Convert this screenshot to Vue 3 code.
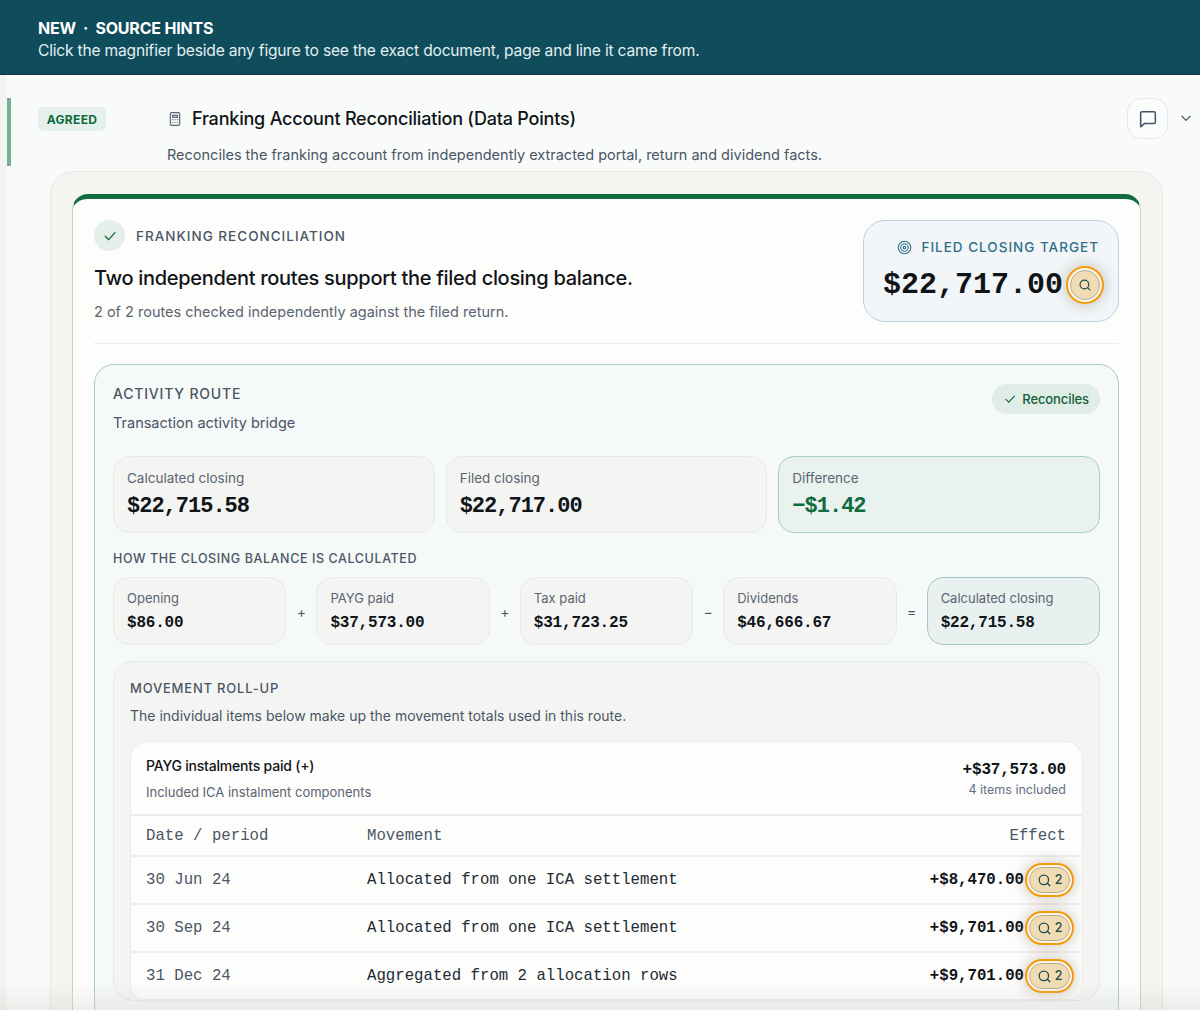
<script setup>
const metrics = [
  { label: 'Calculated closing', value: '$22,715.58' },
  { label: 'Filed closing', value: '$22,717.00' },
  { label: 'Difference', value: '−$1.42', diff: true },
]
const steps = [
  { label: 'Opening', value: '$86.00', op: '+' },
  { label: 'PAYG paid', value: '$37,573.00', op: '+' },
  { label: 'Tax paid', value: '$31,723.25', op: '−' },
  { label: 'Dividends', value: '$46,666.67', op: '=' },
  { label: 'Calculated closing', value: '$22,715.58', total: true },
]
const rows = [
  { date: '30 Jun 24', text: 'Allocated from one ICA settlement', value: '+$8,470.00' },
  { date: '30 Sep 24', text: 'Allocated from one ICA settlement', value: '+$9,701.00' },
  { date: '31 Dec 24', text: 'Aggregated from 2 allocation rows', value: '+$9,701.00' },
]
</script>

<template>
  <div class="screen">
    <header class="banner">
      <div class="banner-title">NEW &nbsp;·&nbsp; SOURCE HINTS</div>
      <div class="banner-text">Click the magnifier beside any figure to see the exact document, page and line it came from.</div>
    </header>
    <div class="page">
      <span class="accent"></span>
      <section class="top">
        <span class="badge">AGREED</span>
        <div class="top-main">
          <h1 class="doc-title">
            <svg class="calc" viewBox="0 0 24 24" fill="none" stroke="#5a6470" stroke-width="1.8" stroke-linecap="round">
              <rect x="5" y="2.5" width="14" height="19" rx="2" />
              <path d="M8.5 6.5h7v3h-7zM8.5 13h.01M12 13h.01M15.5 13h.01M8.5 17h.01M12 17h.01M15.5 17h.01" />
            </svg>
            Franking Account Reconciliation (Data Points)
          </h1>
          <p class="doc-sub">Reconciles the franking account from independently extracted portal, return and dividend facts.</p>
        </div>
        <button class="comment" aria-label="Comment">
          <svg viewBox="0 0 24 24" fill="none" stroke="#475467" stroke-width="1.7" stroke-linejoin="round">
            <path d="M4 5.5A1.5 1.5 0 0 1 5.500 4h13A1.500 1.500 0 0 1 20 5.500v10a1.500 1.500 0 0 1-1.500 1.500H8l-4 3.500z" />
          </svg>
        </button>
        <svg class="chev" viewBox="0 0 24 24" fill="none" stroke="#475467" stroke-width="2" stroke-linecap="round" stroke-linejoin="round"><path d="m5 9 7 7 7-7" /></svg>
      </section>

      <section class="outer">
        <div class="card">
          <div class="hero">
            <div class="hero-left">
              <div class="eyebrow-row">
                <span class="check-dot">
                  <svg viewBox="0 0 24 24" fill="none" stroke="#0f6b3e" stroke-width="2" stroke-linecap="round" stroke-linejoin="round"><path d="m5 12.500 5 5L19.500 7" /></svg>
                </span>
                <span class="eyebrow">FRANKING RECONCILIATION</span>
              </div>
              <h2 class="hero-title">Two independent routes support the filed closing balance.</h2>
              <p class="hero-sub">2 of 2 routes checked independently against the filed return.</p>
            </div>
            <div class="target">
              <div class="target-label">
                <svg viewBox="0 0 24 24" fill="none" stroke="#2f6f8a" stroke-width="1.800"><circle cx="12" cy="12" r="10" /><circle cx="12" cy="12" r="6" /><circle cx="12" cy="12" r="2" /></svg>
                FILED CLOSING TARGET
              </div>
              <div class="target-value">
                <span>$22,717.00</span>
                <button class="hint round" aria-label="Source">
                  <svg viewBox="0 0 24 24" fill="none" stroke="#1f4a45" stroke-width="2" stroke-linecap="round"><circle cx="11" cy="11" r="7.500" /><path d="m20.500 20.500-4-4" /></svg>
                </button>
              </div>
            </div>
          </div>

          <div class="route">
            <div class="route-head">
              <div>
                <div class="route-title">ACTIVITY ROUTE</div>
                <div class="route-sub">Transaction activity bridge</div>
              </div>
              <span class="pill">
                <svg viewBox="0 0 24 24" fill="none" stroke="#0f6b3e" stroke-width="2" stroke-linecap="round" stroke-linejoin="round"><path d="m5 12.500 5 5L19.500 7" /></svg>
                Reconciles
              </span>
            </div>

            <div class="metrics">
              <div v-for="m in metrics" :key="m.label" class="metric" :class="{ diff: m.diff }">
                <div class="metric-label">{{ m.label }}</div>
                <div class="metric-value">{{ m.value }}</div>
              </div>
            </div>

            <div class="calc-title">HOW THE CLOSING BALANCE IS CALCULATED</div>
            <div class="steps">
              <template v-for="s in steps" :key="s.label">
                <div class="step" :class="{ total: s.total }">
                  <div class="step-label">{{ s.label }}</div>
                  <div class="step-value">{{ s.value }}</div>
                </div>
                <span v-if="s.op" class="op">{{ s.op }}</span>
              </template>
            </div>

            <div class="rollup">
              <div class="rollup-title">MOVEMENT ROLL-UP</div>
              <div class="rollup-sub">The individual items below make up the movement totals used in this route.</div>
              <div class="table">
                <div class="table-top">
                  <div>
                    <div class="table-name">PAYG instalments paid (+)</div>
                    <div class="table-desc">Included ICA instalment components</div>
                  </div>
                  <div class="table-sum">
                    <div class="sum-value">+$37,573.00</div>
                    <div class="sum-count">4 items included</div>
                  </div>
                </div>
                <div class="row head-row">
                  <span class="c-date">Date / period</span>
                  <span class="c-text">Movement</span>
                  <span class="c-effect">Effect</span>
                </div>
                <div v-for="r in rows" :key="r.date" class="row">
                  <span class="c-date">{{ r.date }}</span>
                  <span class="c-text">{{ r.text }}</span>
                  <span class="c-effect strong">{{ r.value }}</span>
                  <button class="hint wide" aria-label="Sources">
                    <svg viewBox="0 0 24 24" fill="none" stroke="#1f4a45" stroke-width="2" stroke-linecap="round"><circle cx="11" cy="11" r="7.500" /><path d="m20.500 20.500-4-4" /></svg>
                    <span>2</span>
                  </button>
                </div>
              </div>
            </div>
          </div>
        </div>
      </section>
    </div>
    <div class="fade"></div>
  </div>
</template>

<style>
html, body { margin: 0; overflow: hidden; }
</style>

<style scoped>
* { box-sizing: border-box; }
.screen {
  position: relative;
  width: 1200px;
  height: 1010px;
  overflow: hidden;
  background: #f3f3ef;
  font-family: Inter, "Noto Sans", sans-serif;
  color: #101418;
}
.banner {
  height: 75px;
  padding: 18px 38px 0;
  background: #0f4c5c;
  border-bottom: 1px solid #0a3440;
  color: #fff;
}
.banner-title { font-size: 16px; line-height: 21px; font-weight: 700; letter-spacing: -0.2px; }
.banner-text { font-size: 15.6px; line-height: 24px; color: #e3f0f1; letter-spacing: -0.2px; }
.page {
  position: relative;
  height: 935px;
  margin-left: 7px;
  padding: 4px 0 0;
  background: #f9fbfa;
  border-top: 4px solid #fff;
}
.accent { position: absolute; left: 0; top: 19px; width: 4px; height: 68px; background: #76ae97; }
.top { display: flex; align-items: flex-start; height: 88px; padding: 15px 0 0 31px; }
.badge {
  width: 68px; height: 24px; margin-top: 9px;
  display: flex; align-items: center; justify-content: center;
  background: #e6f0ec; border-radius: 5px;
  color: #0f6b3e; font-size: 12px; font-weight: 700; letter-spacing: .3px;
}
.top-main { width: 960px; margin-left: 61px; }
.doc-title { display: flex; align-items: center; gap: 9px; margin: 7px 0 0; font-size: 18px; line-height: 28px; font-weight: 500; letter-spacing: -0.2px; }
.calc { width: 16px; height: 16px; }
.doc-sub { margin: 11px 0 0; font-size: 14.500px; line-height: 22px; color: #4a5565; }
.comment {
  width: 41px; height: 41px; margin-left: 0;
  display: flex; align-items: center; justify-content: center;
  background: #fbfcfc; border: 1px solid #e4e7e7; border-radius: 14px; padding: 0;
}
.comment svg { width: 22px; height: 22px; }
.chev { width: 14px; height: 14px; margin: 13px 0 0 11px; }
.outer {
  width: 1113px; height: 900px; margin-left: 43px;
  padding: 22px 21px 0;
  background: #f4f4f0; border: 1px solid #e8e8e3; border-radius: 24px;
}
.card {
  height: 860px; padding: 21px 21px 0;
  background: #fdfdfc;
  border: 1px solid #bcd6cd; border-top: 5px solid #0f6b3e;
  border-radius: 16px;
}
.hero { display: flex; justify-content: space-between; height: 124px; border-bottom: 1px solid #ececE8; }
.eyebrow-row { display: flex; align-items: center; gap: 11px; }
.check-dot { width: 31px; height: 31px; border-radius: 50%; background: #e4efea; display: flex; align-items: center; justify-content: center; }
.check-dot svg { width: 16px; height: 16px; }
.eyebrow { font-size: 13.500px; font-weight: 500; letter-spacing: 1px; color: #4a5565; }
.hero-title { margin: 13px 0 0; font-size: 20px; line-height: 28px; font-weight: 500; letter-spacing: -0.3px; }
.hero-sub { margin: 9px 0 0; font-size: 14.500px; line-height: 22px; color: #5a6472; }
.target {
  width: 256px; height: 102px; padding: 17px 19px 0;
  background: #f2f6f9; border: 1px solid #bdd2de; border-radius: 22px;
}
.target-label { display: flex; align-items: center; justify-content: flex-end; gap: 9px; font-size: 13.500px; font-weight: 500; letter-spacing: 1px; color: #2f6f8a; height: 18px; }
.target-label svg { width: 15px; height: 15px; }
.target-value { display: flex; align-items: center; height: 38px; margin-top: 10px; margin-left: 0; font: 700 30px/38px "Liberation Mono", monospace; white-space: nowrap; }
.hint {
  flex: none; display: flex; align-items: center; justify-content: center; padding: 0;
  background: #efdcb5; border: 1px solid #b5ab94;
  box-shadow: 0 0 0 2px #fbf6ea, 0 0 0 4px #f59a0b, 0 0 14px 5px rgba(90, 70, 30, .28);
  color: #1f4a45;
}
.round { width: 30px; height: 30px; border-radius: 50%; margin-left: 7px; }
.round svg { width: 14px; height: 14px; }
.wide { width: 41px; height: 26px; border-radius: 13px; gap: 3px; margin-left: 5px; font: 500 12.500px/1 Inter, sans-serif; }
.wide svg { width: 15px; height: 15px; }
.route {
  height: 720px; margin-top: 20px; padding: 19px 18px 0;
  background: #f5f9f7; border: 1px solid #a9cfc0; border-radius: 20px;
}
.route-head { display: flex; justify-content: space-between; align-items: flex-start; height: 72px; }
.route-title { font-size: 14px; line-height: 20px; font-weight: 500; letter-spacing: .8px; color: #4a5565; }
.route-sub { margin-top: 9px; font-size: 14.500px; line-height: 20px; color: #4a5565; }
.pill { display: flex; align-items: center; gap: 5px; height: 30px; padding: 0 11px; border-radius: 15px; background: #e0ede7; color: #0f5f38; font-size: 13px; font-weight: 500; letter-spacing: -0.1px; }
.pill svg { width: 14px; height: 14px; }
.metrics { display: grid; grid-template-columns: repeat(3, 1fr); gap: 11px; }
.metric { height: 77px; padding: 13px 13px 0; background: #f4f5f2; border: 1px solid #e8eae6; border-radius: 16px; }
.metric.diff { background: #e9f2ee; border-color: #a9cfc0; }
.metric-label { font-size: 13.500px; line-height: 16px; color: #5a6472; }
.metric-value { margin-top: 8px; font: 700 22px/26px "Liberation Mono", monospace; letter-spacing: -1px; }
.diff .metric-value { color: #0f6b3e; }
.calc-title { margin-top: 17px; font-size: 12.500px; line-height: 18px; font-weight: 500; letter-spacing: .6px; color: #4a5565; }
.steps { display: flex; align-items: stretch; margin-top: 9px; }
.step { flex: 1 1 0; min-width: 0; height: 68px; padding: 12px 13px 0; background: #f4f5f2; border: 1px solid #e8eae6; border-radius: 16px; }
.step.total { background: #e8f1f0; border-color: #a8c8c8; }
.step-label { font-size: 13px; line-height: 16px; color: #5a6472; }
.step-value { margin-top: 6px; font: 700 16px/22px "Liberation Mono", monospace; letter-spacing: -0.2px; }
.op { flex: none; width: 30px; display: flex; align-items: center; justify-content: center; font-size: 14px; color: #4a5565; }
.rollup { height: 340px; margin-top: 16px; padding: 17px 16px 0; background: #f4f5f2; border: 1px solid #e8eae6; border-radius: 20px; }
.rollup-title { font-size: 13px; line-height: 18px; font-weight: 500; letter-spacing: .8px; color: #4a5565; }
.rollup-sub { margin-top: 9px; font-size: 14px; line-height: 20px; color: #4a5565; }
.table { margin-top: 15px; background: #fdfdfc; border: 1px solid #ecedea; border-radius: 18px; overflow: hidden; }
.table-top { display: flex; justify-content: space-between; height: 74px; padding: 14px 16px 0 15px; border-bottom: 2px solid #eeeeea; }
.table-name { font-size: 14px; line-height: 20px; font-weight: 500; letter-spacing: -0.2px; }
.table-desc { margin-top: 6px; font-size: 13px; line-height: 20px; color: #5a6472; }
.table-sum { text-align: right; }
.sum-value { margin-top: 4px; font: 700 16px/20px "Liberation Mono", monospace; letter-spacing: -0.2px; }
.sum-count { margin-top: 2px; font-size: 12.500px; line-height: 16px; color: #667085; }
.row { display: flex; align-items: center; height: 48px; padding: 0 12px 0 15px; border-bottom: 2px solid #eeeeea; font: 15.700px "Liberation Mono", monospace; color: #222a33; white-space: nowrap; }
.head-row { height: 41px; padding-right: 16px; color: #4a5565; }
.c-date { width: 221px; color: #4a5565; }
.c-text { flex: 1; }
.strong { font-weight: 700; color: #101418; }
.fade { position: absolute; left: 0; right: 0; bottom: 0; height: 28px; background: linear-gradient(rgba(200, 200, 195, 0), rgba(200, 200, 195, .28)); pointer-events: none; }
</style>
